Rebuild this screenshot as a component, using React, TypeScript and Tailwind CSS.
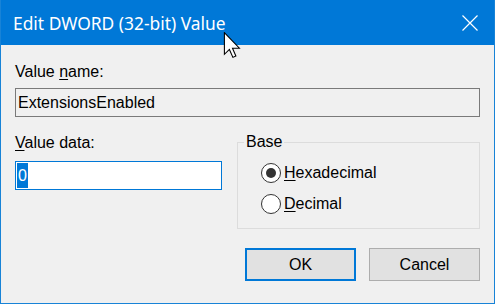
import React from "react";

const label = "font-['Liberation_Sans',Arial,sans-serif] text-[16px] leading-[18px] text-black";

function Radio({ checked, children }: { checked?: boolean; children: React.ReactNode }) {
  return (
    <div className="flex items-center gap-[3px]">
      <span className="flex h-[20px] w-[20px] items-center justify-center rounded-full border border-[#333333] bg-white">
        {checked && <span className="h-[10px] w-[10px] rounded-full bg-[#333333]" />}
      </span>
      <span className={label}>{children}</span>
    </div>
  );
}

export default function App() {
  return (
    <div className="relative flex h-[304px] w-[495px] flex-col overflow-hidden border-x border-b border-[#1883d7] bg-[#f0f0f0]">
      {/* title bar */}
      <div className="-mx-px flex h-[45px] shrink-0 items-center justify-between bg-[#0078d7] pl-[13px] pr-[17px]">
        <span className="font-['Noto_Sans',sans-serif] text-[17.4px] leading-[20px] text-white">
          Edit DWORD (32-bit) Value
        </span>
        <svg width="16" height="16" viewBox="0 0 16 16" className="text-white">
          <path d="M0.5 0.5 L15.5 15.5 M15.5 0.5 L0.5 15.5" stroke="currentColor" strokeWidth="1.2" />
        </svg>
      </div>

      <div className="flex flex-1 flex-col px-[14px] pt-[18px]">
        <div className={label}>
          Value <span className="underline underline-offset-2">n</span>ame:
        </div>
        <div className="mt-[7px] flex h-[29px] items-center border border-[#7a7a7a] bg-[#f0f0f0] px-[2px]">
          <span className={label}>ExtensionsEnabled</span>
        </div>

        <div className="mt-[17px] flex gap-[15px]">
          <div className="flex w-[207px] flex-col">
            <div className={label}>
              <span className="underline underline-offset-2">V</span>alue data:
            </div>
            <div className="mt-[9px] flex h-[29px] items-stretch border border-[#0078d7] bg-white p-px">
              <span className="flex items-center bg-[#0078d7] px-[1px] font-['Liberation_Sans',Arial,sans-serif] text-[16px] text-white">
                0
              </span>
            </div>
          </div>

          <fieldset className="-mt-[1px] h-[96px] flex-1 border border-[#dcdcdc]">
            <legend className={`${label} ml-[6px] px-[2px]`}>Base</legend>
            <div className="mt-[12px] flex flex-col gap-[11px] pl-[23px]">
              <Radio checked>
                <span className="underline underline-offset-2">H</span>exadecimal
              </Radio>
              <Radio>
                <span className="underline underline-offset-2">D</span>ecimal
              </Radio>
            </div>
          </fieldset>
        </div>

        <div className="mt-[19px] flex justify-end gap-[13px]">
          <button className={`${label} h-[33px] w-[111px] border-2 border-[#0078d7] bg-[#e1e1e1]`}>OK</button>
          <button className={`${label} h-[33px] w-[111px] border border-[#adadad] bg-[#e1e1e1]`}>Cancel</button>
        </div>
      </div>

      {/* mouse pointer */}
      <svg
        className="absolute left-[222px] top-[32px]"
        width="19"
        height="27"
        viewBox="0 0 13 20"
      >
        <path
          d="M0.5 0.5 L0.5 16.5 L4.2 12.9 L6.8 18.8 L9 17.8 L6.5 12 L11.6 12 Z"
          fill="white"
          stroke="black"
          strokeWidth="0.8"
          strokeLinejoin="miter"
        />
      </svg>
    </div>
  );
}
